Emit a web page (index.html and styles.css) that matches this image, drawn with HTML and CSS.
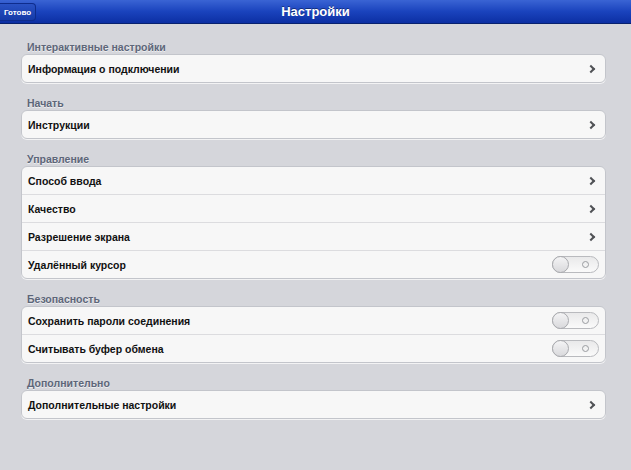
FILE: index.html
```html
<!DOCTYPE html>
<html lang="ru">
<head>
    <meta charset="UTF-8">
    <meta name="viewport" content="width=device-width, initial-scale=1.0">
    <title>Настройки</title>
    <link rel="stylesheet" href="styles.css">
</head>
<body>
    <div class="navbar">
        <div class="done-btn">Готово</div>
        <h1>Настройки</h1>
    </div>

    <div class="content">
        <div class="section">
            <div class="section-title">Интерактивные настройки</div>
            <div class="group">
                <div class="row">Информация о подключении<span class="chevron"></span></div>
            </div>
        </div>

        <div class="section">
            <div class="section-title">Начать</div>
            <div class="group">
                <div class="row">Инструкции<span class="chevron"></span></div>
            </div>
        </div>

        <div class="section">
            <div class="section-title">Управление</div>
            <div class="group">
                <div class="row">Способ ввода<span class="chevron"></span></div>
                <div class="row">Качество<span class="chevron"></span></div>
                <div class="row">Разрешение экрана<span class="chevron"></span></div>
                <div class="row">Удалённый курсор<span class="switch"><span class="knob"></span><span class="ring"></span></span></div>
            </div>
        </div>

        <div class="section">
            <div class="section-title">Безопасность</div>
            <div class="group">
                <div class="row">Сохранить пароли соединения<span class="switch"><span class="knob"></span><span class="ring"></span></span></div>
                <div class="row">Считывать буфер обмена<span class="switch"><span class="knob"></span><span class="ring"></span></span></div>
            </div>
        </div>

        <div class="section">
            <div class="section-title">Дополнительно</div>
            <div class="group">
                <div class="row">Дополнительные настройки<span class="chevron"></span></div>
            </div>
        </div>
    </div>
</body>
</html>
```

FILE: styles.css
```css
body {
    margin: 0;
    padding: 0;
    height: 100vh;
    overflow: hidden;
    font-family: "Liberation Sans", Arial, sans-serif;
    background: #d5d6db;
}
/* Синяя панель сверху */
.navbar {
    position: relative;
    height: 23px;
    display: flex;
    align-items: center;
    justify-content: center;
    background: linear-gradient(#3a64d4, #1a43bd 50%, #0c2fa3);
    border-bottom: 1px solid #08216e;
}
.navbar h1 {
    margin: 0;
    font-size: 13px;
    color: white;
    text-shadow: 0 -1px 0 rgba(0, 0, 0, 0.4);
}
.done-btn {
    position: absolute;
    left: 0;
    top: 3px;
    height: 18px;
    width: 36px;
    display: flex;
    align-items: center;
    justify-content: center;
    font-size: 8px;
    font-weight: bold;
    color: white;
    background: linear-gradient(#2a52c4, #143aa8);
    border: 1px solid #0e2c8c;
    border-left: none;
    border-radius: 0 4px 4px 0;
    box-sizing: border-box;
}
.content {
    padding: 17px 25px 0 21px;
}
.section {
    margin-top: 14px;
}
.section:first-child {
    margin-top: 0;
}
.section-title {
    padding-left: 6px;
    font-size: 10.5px;
    line-height: 12px;
    margin-bottom: 1px;
    font-weight: bold;
    color: #5d6679;
    text-shadow: 0 1px 0 rgba(255, 255, 255, 0.6);
}
.group {
    background: #f7f7f7;
    border: 1px solid #c3c5cb;
    border-radius: 6px;
    box-shadow: 0 1px 0 rgba(255, 255, 255, 0.7);
}
.row {
    height: 27px;
    padding: 0 6px 0 6px;
    display: flex;
    align-items: center;
    justify-content: space-between;
    font-size: 10.5px;
    font-weight: bold;
    color: #111;
    border-top: 1px solid #dcdcdf;
}
.row:first-child {
    border-top: none;
}
/* Стрелка справа */
.chevron {
    width: 4px;
    height: 4px;
    margin-right: 5px;
    border-top: 2px solid #505256;
    border-right: 2px solid #505256;
    transform: rotate(45deg);
}
/* Переключатель (выключен) */
.switch {
    position: relative;
    width: 47px;
    height: 17px;
    border: 1px solid #b9babe;
    border-radius: 9px;
    background: linear-gradient(#e9e9ea, #fafafa);
    box-sizing: border-box;
}
.knob {
    position: absolute;
    left: -1px;
    top: -1px;
    width: 17px;
    height: 17px;
    border-radius: 50%;
    border: 1px solid #a9aaae;
    background: linear-gradient(#f4f4f5, #d9d9dc);
    box-sizing: border-box;
}
.ring {
    position: absolute;
    right: 9px;
    top: 4px;
    width: 7px;
    height: 7px;
    border-radius: 50%;
    border: 1px solid #9a9ca0;
    box-sizing: border-box;
}
```
